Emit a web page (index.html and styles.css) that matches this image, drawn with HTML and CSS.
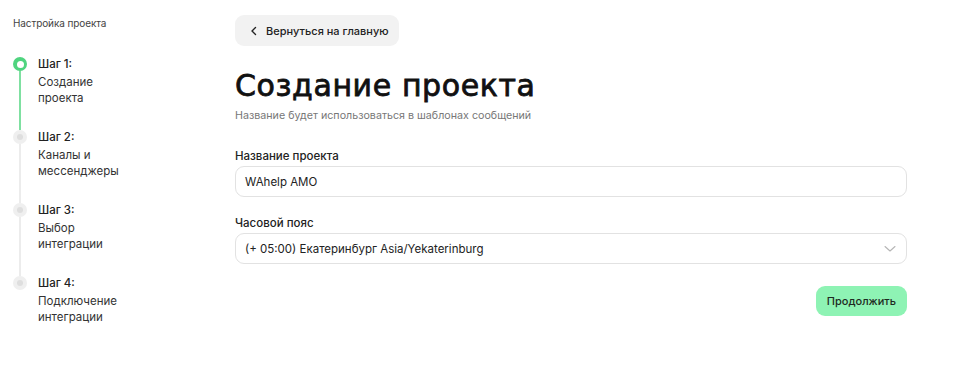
FILE: index.html
```html
<!DOCTYPE html>
<html lang="ru">
<head>
<meta charset="utf-8">
<link rel="stylesheet" href="styles.css">
</head>
<body>
<div class="page">
  <aside class="sidebar">
    <div class="side-title">Настройка проекта</div>
    <ol class="steps">
      <li class="step active">
        <div class="rail"><span class="dot"></span><span class="line"></span></div>
        <div class="step-text"><div class="step-num">Шаг 1:</div><div class="step-name">Создание<br>проекта</div></div>
      </li>
      <li class="step">
        <div class="rail"><span class="dot"></span><span class="line"></span></div>
        <div class="step-text"><div class="step-num">Шаг 2:</div><div class="step-name">Каналы и<br>мессенджеры</div></div>
      </li>
      <li class="step">
        <div class="rail"><span class="dot"></span><span class="line"></span></div>
        <div class="step-text"><div class="step-num">Шаг 3:</div><div class="step-name">Выбор<br>интеграции</div></div>
      </li>
      <li class="step last">
        <div class="rail"><span class="dot"></span></div>
        <div class="step-text"><div class="step-num">Шаг 4:</div><div class="step-name">Подключение<br>интеграции</div></div>
      </li>
    </ol>
  </aside>
  <main class="main">
    <button class="back">
      <svg class="back-icon" width="10" height="10" viewBox="0 0 10 10"><path d="M6.5 1.5 L3 5 L6.5 8.5" fill="none" stroke="#222" stroke-width="1.4" stroke-linecap="round" stroke-linejoin="round"/></svg>
      <span>Вернуться на главную</span>
    </button>
    <h1 class="title">Создание проекта</h1>
    <p class="subtitle">Название будет использоваться в шаблонах сообщений</p>
    <div class="field">
      <label class="label">Название проекта</label>
      <div class="input">WAhelp AMO</div>
    </div>
    <div class="field">
      <label class="label">Часовой пояс</label>
      <div class="input select">
        <span>(+ 05:00) Екатеринбург Asia/Yekaterinburg</span>
        <svg width="12" height="8" viewBox="0 0 12 8"><path d="M1 1.5 L6 6 L11 1.5" fill="none" stroke="#b5b5b5" stroke-width="1.1" stroke-linecap="round" stroke-linejoin="round"/></svg>
      </div>
    </div>
    <div class="actions">
      <button class="primary">Продолжить</button>
    </div>
  </main>
</div>
</body>
</html>
```
FILE: styles.css
```css
* { box-sizing: border-box; }
html, body { margin: 0; padding: 0; background: #fff; }
body { font-family: Inter, "Noto Sans", sans-serif; color: #222; }
.page { display: flex; width: 974px; height: 383px; }
.sidebar { width: 235px; padding: 17px 0 0 13px; flex-shrink: 0; }
.side-title { font-size: 10px; color: #444; line-height: 13px; letter-spacing: -0.1px; }
.steps { list-style: none; margin: 27px 0 0 0; padding: 0; }
.step { display: flex; gap: 11px; height: 73px; }
.step.last { height: auto; }
.rail { width: 14px; display: flex; flex-direction: column; align-items: center; }
.dot { width: 14px; height: 14px; border-radius: 50%; background: #efefef; position: relative; flex-shrink: 0; }
.dot::after { content: ""; position: absolute; left: 4px; top: 4px; width: 6px; height: 6px; border-radius: 50%; background: #dedede; }
.step.active .dot { background: #4fd47f; }
.step.active .dot::after { background: #fff; left: 3.5px; top: 3.5px; width: 7px; height: 7px; }
.line { width: 2px; flex: 1; background: #ececec; }
.step.active .line { background: #7fe0a1; }
.step-num { font-size: 11.5px; font-weight: 500; line-height: 14px; color: #222; }
.step-name { font-size: 11.5px; line-height: 16px; margin-top: 3px; color: #333; }
.main { flex: 1; padding: 15px 67px 0 0; }
.back { display: inline-flex; align-items: center; gap: 7px; height: 31px; padding: 0 10px 0 14px; border: 0; border-radius: 9px; background: #f2f2f2; font-family: inherit; font-size: 11px; font-weight: 500; color: #222; }
.back-icon { margin-top: 1px; }
.title { font-family: "DejaVu Sans", sans-serif; font-size: 30px; font-weight: 400; -webkit-text-stroke: 0.8px #111; margin: 23px 0 0 0; line-height: 34px; color: #111; letter-spacing: 0.6px; }
.subtitle { font-size: 10.7px; color: #777; margin: 6px 0 0 0; line-height: 14px; }
.field { margin-top: 26px; }
.field + .field { margin-top: 19px; }
.label { display: block; font-size: 11.5px; font-weight: 500; color: #222; line-height: 14px; margin-bottom: 3px; }
.input { height: 31px; border: 1px solid #e2e2e2; border-radius: 9px; padding: 0 9px; display: flex; align-items: center; font-size: 11.5px; color: #222; }
.select { justify-content: space-between; padding-right: 10px; }
.actions { display: flex; justify-content: flex-end; margin-top: 22px; }
.primary { height: 30px; padding: 0 11px; border: 0; border-radius: 9px; background: #8ef3b4; font-family: inherit; font-size: 11px; font-weight: 500; color: #1e2a22; }
```
